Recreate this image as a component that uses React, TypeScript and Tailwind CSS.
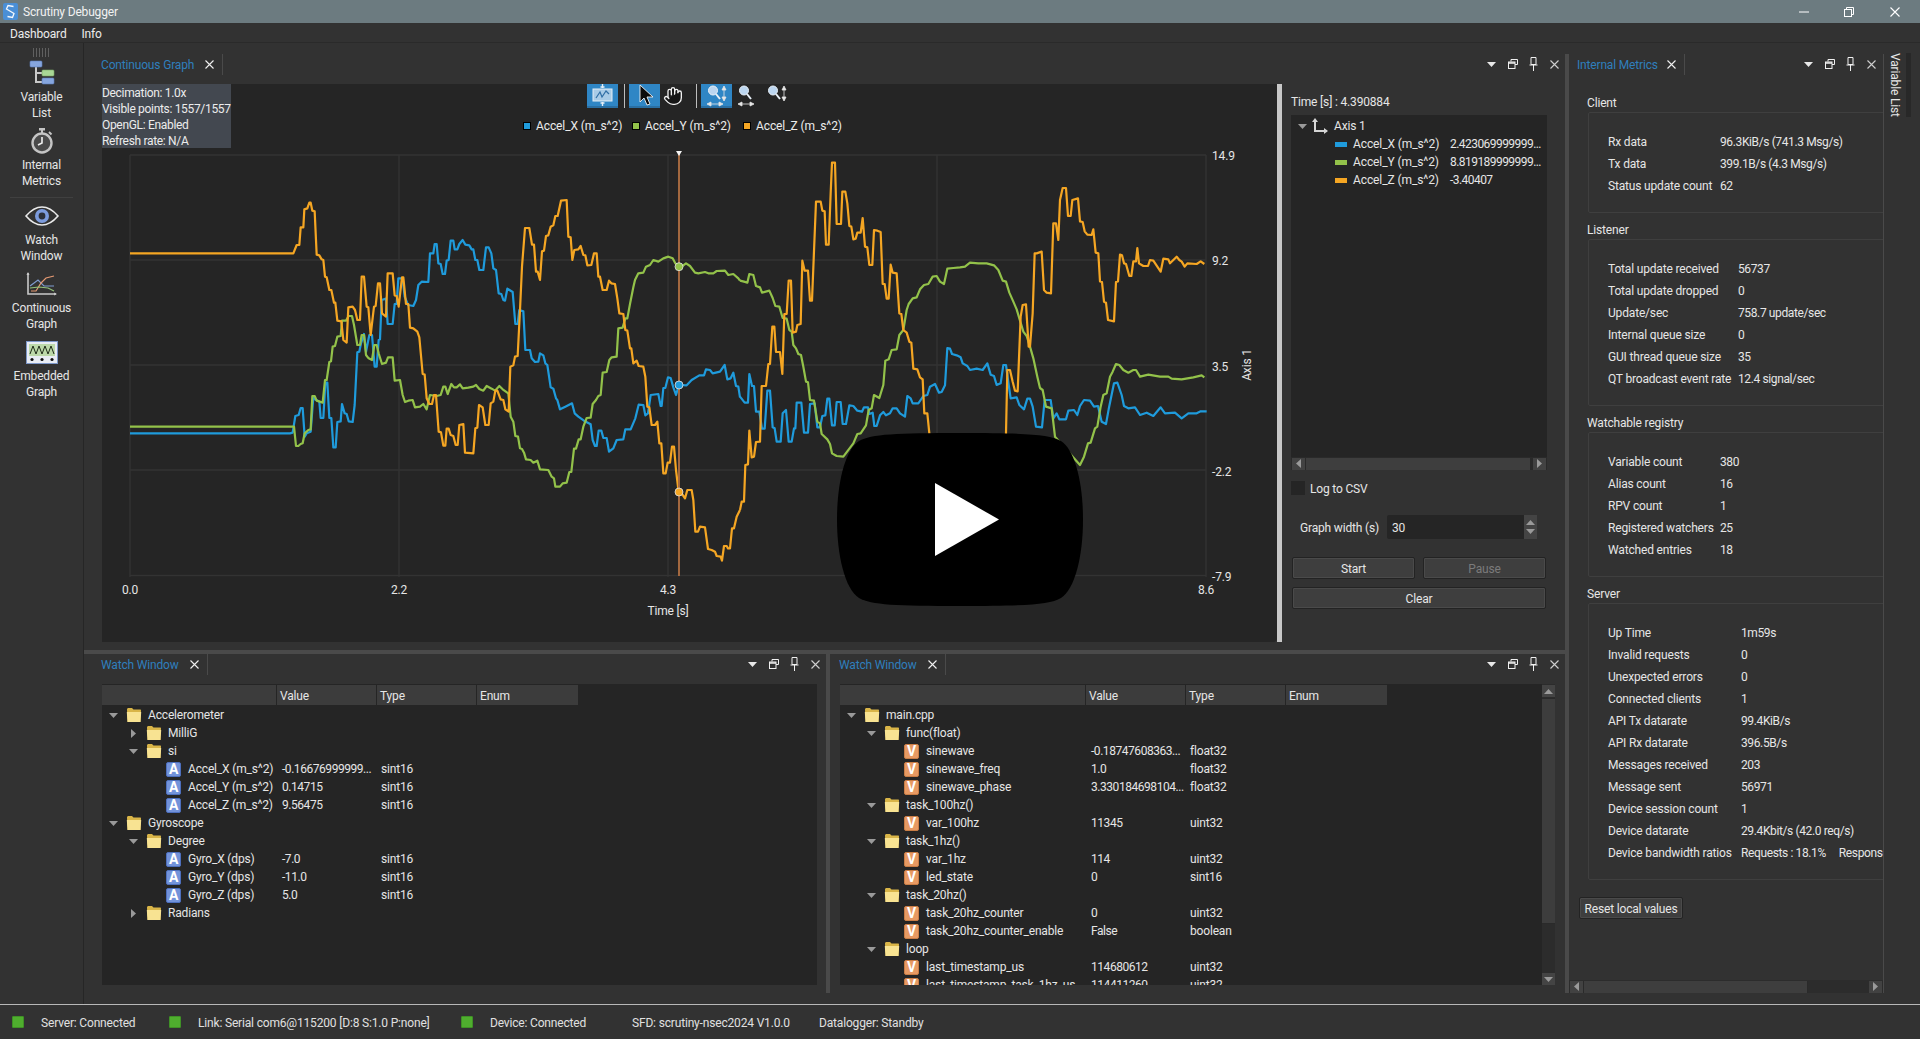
import { Hand } from 'lucide-react';

const orangeA = '-450,310 40,310 50,285 58,285 62,232 70,232 73,178 82,175 88,158 92,158 97,182 104,184 110,314 118,316 125,328 130,330 135,380 140,382 148,420 154,420 162,458 166,458 172,512 184,514 190,570 200,578 205,472 218,470 225,480 232,510 240,510 245,380 252,380 260,470 265,472 272,555 282,470 287,468 294,400 300,400 306,490 318,500 323,370 338,370 344,436 350,438 356,470 366,382 370,382 378,462 385,462 390,533 400,535 412,545 418,562 428,672 434,674 440,745 448,762 456,762 462,735 468,735 476,845 483,847 490,887 496,887 500,836 506,836 512,855 520,858 527,885 533,885 538,825 550,822 555,908 580,910 586,835 592,833 597,765 608,772 616,825 626,825 632,760 640,755 646,722 652,722 662,748 670,750 676,778 686,785 691,650 700,646 705,620 713,618 720,480 726,350 735,234 748,234 756,284 762,284 768,365 773,365 780,390 786,304 792,302 798,258 805,256 812,230 820,226 826,198 833,198 843,152 860,150 865,260 872,262 877,330 883,300 895,298 902,288 910,315 916,316 922,346 934,345 942,310 950,310 955,380 960,380 968,420 980,420 987,392 994,400 1005,402 1012,445 1018,490 1030,492 1036,540 1042,542 1050,595 1054,595 1060,640 1070,632 1076,648 1090,650 1096,680 1102,770 1108,772 1115,825 1125,825 1132,815 1138,880 1144,880 1150,970 1157,970 1163,938 1170,938 1176,890 1182,890 1188,960 1196,1026 1205,1030 1215,1045 1222,1020 1235,1020 1240,1050 1246,1145 1254,1145 1260,1130 1275,1132 1284,1197 1295,1200 1305,1205 1310,1218 1322,1220 1326,1232 1332,1188 1340,1188 1344,1195 1350,1195 1356,1135 1362,1135 1370,1100 1380,1080';
const orangeB = '0,1080 5,1055 12,1055 16,945 24,943 28,842 35,922 42,920 48,876 60,875 65,708 78,708 85,642 90,642 97,530 103,530 108,606 120,606 127,672 133,492 140,492 146,392 153,392 158,548 168,545 172,525 182,522 187,332 194,362 204,362 210,452 216,452 228,155 242,155 247,182 254,184 258,284 266,284 272,130 276,38 285,38 290,222 303,222 307,125 316,125 322,160 328,228 334,230 340,268 347,266 352,248 362,248 368,204 375,290 382,292 388,345 397,345 402,240 412,242 422,246 428,402 434,402 440,446 446,446 452,344 458,368 470,370 478,490 484,492 490,540 500,548 508,575 514,578 520,656 532,658 540,682 548,688 553,790 562,790 568,850 580,960 790,960 798,850 802,660 810,660 818,695 825,722 833,724 842,500 848,465 858,463 866,590 870,590 878,490 884,310 890,310 905,305 912,420 920,428 933,430 940,220 948,220 955,270 960,150 968,114 978,114 984,198 992,198 997,150 1014,145 1020,214 1028,216 1034,244 1042,254 1055,255 1060,238 1067,308 1075,310 1080,394 1086,396 1092,455 1098,458 1104,510 1122,514 1128,396 1134,394 1140,314 1146,316 1152,340 1158,342 1168,378 1174,378 1180,334 1188,334 1192,294 1197,340 1210,348 1224,348 1230,330 1240,332 1252,350 1262,365 1270,326 1285,328 1290,340 1300,330 1310,320 1318,330 1325,335 1334,350 1342,340 1370,342 1382,334 1393,342';
const greenA = '-450,830 42,830 48,888 55,888 62,882 68,880 74,850 85,840 92,838 97,738 104,738 110,752 128,758 135,690 140,690 148,636 153,634 158,590 165,588 172,560 182,558 186,512 198,512 206,498 216,498 222,525 232,585 240,585 245,555 252,555 258,615 266,625 276,630 283,585 290,585 296,610 306,642 318,638 324,622 338,622 344,692 360,690 368,735 375,756 385,752 398,750 405,772 420,770 430,762 440,778 450,735 470,738 482,735 490,710 496,710 503,732 514,702 522,712 530,712 540,703 548,715 565,713 580,710 588,705 598,717 610,722 620,708 635,716 645,722 658,708 668,718 685,730 692,800 700,815 706,858 714,860 720,895 726,897 732,908 738,928 752,930 760,938 772,932 780,958 805,960 815,980 822,985 826,1010 840,1010 848,1000 860,998 868,966 874,966 882,896 888,896 896,868 902,868 910,830 920,804 932,803 938,762 948,750 955,738 962,735 968,668 980,666 988,630 995,622 1010,620 1015,535 1028,533 1036,505 1042,505 1050,462 1060,412 1065,390 1075,370 1090,368 1098,350 1110,345 1120,330 1135,335 1150,325 1165,320 1178,325 1186,340 1196,350 1205,350 1218,340 1230,348 1245,368 1255,370 1275,366 1285,370 1300,370 1310,363 1335,362 1345,375 1360,372 1375,385 1380,392';
const greenB = '0,392 12,395 22,398 28,372 40,375 48,408 60,412 66,428 88,422 98,444 106,468 118,470 128,504 140,506 148,540 155,545 160,585 168,595 175,612 183,615 190,650 198,695 204,697 210,750 222,752 232,815 240,820 245,852 262,868 270,882 276,910 290,918 310,920 340,880 352,852 362,850 378,826 386,780 395,775 402,735 418,744 430,705 436,632 446,628 455,600 470,598 478,555 490,540 500,480 506,462 518,445 530,442 540,418 552,405 565,402 578,380 590,378 600,395 612,402 622,356 640,354 660,352 675,350 690,338 715,340 740,340 762,346 775,360 788,392 798,395 808,428 820,455 830,478 838,505 850,545 860,558 870,590 880,625 892,680 900,714 908,720 918,770 935,775 945,860 1020,945 1032,920 1044,880 1052,878 1065,835 1072,830 1082,770 1090,735 1100,730 1110,680 1118,665 1128,642 1138,645 1150,660 1165,668 1180,660 1188,660 1200,680 1225,674 1260,680 1285,680 1295,686 1325,688 1360,682 1385,676 1393,682';
const blueA = '-450,850 30,850 38,848 46,798 56,795 62,774 68,774 74,860 80,850 92,845 100,740 105,748 118,755 122,804 130,804 136,698 142,698 148,804 154,804 160,892 167,892 172,816 182,814 186,762 194,790 200,792 206,814 218,816 224,765 232,607 238,605 243,580 252,552 258,605 268,555 276,555 284,650 290,650 296,570 300,568 305,450 318,446 323,522 338,522 344,462 350,462 355,385 368,385 374,440 384,465 400,468 408,450 415,405 425,395 445,396 450,310 460,310 464,282 470,282 475,340 482,342 488,372 495,372 500,332 506,330 512,272 520,272 524,298 532,298 538,282 548,270 556,284 568,286 575,298 580,298 586,330 592,330 598,360 610,360 618,292 626,292 634,310 640,355 648,360 656,430 664,432 670,450 675,452 682,416 698,426 706,522 713,522 718,480 730,484 736,600 750,600 755,625 765,636 775,635 780,610 790,616 796,640 802,645 812,712 820,716 828,745 832,750 840,778 856,770 876,760 884,790 895,800 912,812 932,823 938,870 945,888 950,888 956,842 964,842 970,864 980,864 987,905 1000,895 1010,870 1030,868 1036,838 1052,838 1066,805 1076,764 1090,765 1096,796 1104,790 1112,735 1135,732 1142,768 1145,768 1150,714 1156,714 1164,682 1172,684 1180,712 1188,735 1197,705 1220,706 1235,690 1258,676 1272,676 1278,658 1290,660 1298,670 1320,665 1334,645 1342,688 1352,685 1360,668 1368,708 1375,710 1380,742';
const blueB = '0,740 14,758 24,758 28,672 36,708 42,708 48,785 58,785 66,836 74,836 82,722 90,722 98,832 104,835 110,875 122,875 128,790 138,780 146,875 155,875 162,835 166,835 170,758 184,758 192,848 204,848 210,762 224,760 232,832 240,832 247,798 256,796 262,746 268,746 276,826 284,826 290,756 302,756 308,822 318,822 328,766 340,768 352,782 366,785 372,772 384,772 388,792 398,788 403,828 410,828 420,796 430,786 438,796 450,790 458,775 470,775 480,790 495,800 502,738 512,745 518,760 535,760 550,738 562,735 570,710 585,702 597,728 605,726 615,706 622,594 630,596 636,612 650,616 662,622 668,640 682,648 690,660 710,656 728,660 742,640 752,674 762,678 770,705 782,700 790,645 798,645 804,690 812,745 830,742 838,765 852,778 862,746 870,746 878,770 888,830 906,832 914,750 932,750 940,805 950,790 958,808 978,808 985,782 1002,780 1012,795 1020,768 1032,750 1050,752 1062,770 1074,768 1085,815 1098,822 1106,778 1122,700 1132,698 1145,735 1152,768 1165,775 1185,772 1200,795 1220,788 1240,798 1262,772 1275,790 1305,788 1325,805 1345,790 1370,790 1382,784 1400,784';

const BLUE = '#1f9bdc';
const GREEN = '#93c24a';
const ORANGE = '#f5a623';

const pushButton = 'text-center bg-[#3e3e3e] border border-[#232323] rounded-[2px] shadow-[inset_0_0_0_1px_#4a4a4a]';

function TriangleDown({ color = '#9a9a9a' }: { color?: string }) {
  return (
    <svg width="9" height="5" viewBox="0 0 9 5">
      <path d="M0 0h9L4.5 5z" fill={color} />
    </svg>
  );
}

function TriangleRight() {
  return (
    <svg width="5" height="9" viewBox="0 0 5 9">
      <path d="M0 0l5 4.5L0 9z" fill="#9a9a9a" />
    </svg>
  );
}

function DockButtons() {
  return (
    <div className="flex items-center text-white">
      <div className="w-[21px] h-5 flex items-center justify-center"><TriangleDown color="#e8e8e8" /></div>
      <div className="w-[21px] h-5 flex items-center justify-center">
        <svg width="10" height="10" viewBox="0 0 10 10" fill="none" stroke="#f0f0f0">
          <path d="M3 2.5V.5h6.5v5H7" />
          <rect x=".5" y="3" width="6.5" height="6.5" strokeWidth="1" />
          <path d="M.5 4h6.5" strokeWidth="1.5" />
        </svg>
      </div>
      <div className="w-[21px] h-5 flex items-center justify-center">
        <svg width="9" height="14" viewBox="0 0 9 14" fill="none" stroke="#f0f0f0">
          <path d="M2 .5h5v7H2z M.5 8h8 M4.5 8v6" />
        </svg>
      </div>
      <div className="w-[21px] h-5 flex items-center justify-center">
        <svg width="9" height="9" viewBox="0 0 9 9" stroke="#cfcfcf" strokeWidth="1.1">
          <path d="M.5.5l8 8M8.5.5l-8 8" />
        </svg>
      </div>
    </div>
  );
}

function DockTab({ title, tabWidth }: { title: string; tabWidth: string }) {
  return (
    <div className={`flex items-center h-[21px] border-r border-[#4a4a4a] ${tabWidth}`}>
      <span className="text-[#2f7fbd] whitespace-nowrap">{title}</span>
      <svg className="ml-auto mr-[8px]" width="9" height="9" viewBox="0 0 9 9" stroke="#f0f0f0" strokeWidth="1.1">
        <path d="M.5.5l8 8M8.5.5l-8 8" />
      </svg>
    </div>
  );
}

function ToolButton({ icon, lines }: { icon: React.ReactNode; lines: string[] }) {
  return (
    <div className="h-16 flex flex-col items-center">
      <div className="h-8 flex items-center justify-center">{icon}</div>
      {lines.map((l) => (
        <div key={l} className="h-4 leading-4 text-center">{l}</div>
      ))}
    </div>
  );
}

function VariableListIcon() {
  return (
    <svg width="26" height="26" viewBox="0 0 26 26" fill="none">
      <path d="M7 6v17M7 13h7M7 22h7" stroke="#c9c9c9" strokeWidth="2" />
      <rect x="1" y="1" width="12" height="6" rx="1" fill="#86a6de" stroke="#5c7cb8" strokeWidth=".6" />
      <rect x="13" y="10" width="12" height="6" rx="1" fill="#a9d796" stroke="#7aa866" strokeWidth=".6" />
      <rect x="13" y="18" width="12" height="6" rx="1" fill="#86a6de" stroke="#5c7cb8" strokeWidth=".6" />
    </svg>
  );
}

function StopwatchIcon() {
  return (
    <svg width="24" height="26" viewBox="0 0 24 26" fill="none">
      <rect x="9" y="0" width="6" height="2.5" fill="#c4c4c4" />
      <rect x="11" y="2" width="2" height="3" fill="#c4c4c4" />
      <path d="M19 4l2.5 2.5" stroke="#c4c4c4" strokeWidth="2" />
      <circle cx="12" cy="15" r="9.5" fill="#4a4a4a" stroke="#c4c4c4" strokeWidth="2.4" />
      <path d="M12 9v6l-4 2" stroke="#efefef" strokeWidth="1.6" />
    </svg>
  );
}

function EyeIcon() {
  return (
    <svg width="34" height="20" viewBox="0 0 34 20" fill="none">
      <path d="M1 10C7 3 12 1 17 1s10 2 16 9c-6 7-11 9-16 9S7 17 1 10z" stroke="#eaeaea" strokeWidth="1.6" />
      <circle cx="17" cy="10" r="7" fill="#7c9bdc" />
      <circle cx="17" cy="10" r="3.4" fill="#2c3038" />
    </svg>
  );
}

function ContinuousIcon() {
  return (
    <svg width="32" height="25" viewBox="0 0 32 25" fill="none">
      <path d="M2 1v21h28" stroke="#c9c9c9" strokeWidth="1.6" />
      <path d="M2 0l-1.5 3h3zM31 22l-3-1.5v3z" fill="#c9c9c9" />
      <path d="M4 14l8-6 6 6 10 0" stroke="#7f9bd0" strokeWidth="1.2" />
      <path d="M5 19h5l5-8 5-5 8-2" stroke="#e59a73" strokeWidth="1.2" />
      <path d="M4 16l9-1 9 1 6 3" stroke="#93c27a" strokeWidth="1.2" />
    </svg>
  );
}

function EmbeddedIcon() {
  return (
    <svg width="32" height="23" viewBox="0 0 32 23">
      <rect x=".5" y=".5" width="31" height="22" fill="#e8ecf4" stroke="#7d97c8" />
      <rect x="3" y="3" width="26" height="12" fill="#bcd9a9" />
      <path d="M4 13l3-8 3 8 3-8 3 8 3-8 3 8 3-8 3 8" fill="none" stroke="#1e2a18" strokeWidth="1" />
      <circle cx="6" cy="18.5" r="1.6" fill="#111" />
      <circle cx="16" cy="18.5" r="1.6" fill="#111" />
      <circle cx="26" cy="18.5" r="1.6" fill="#111" />
    </svg>
  );
}

function Sidebar() {
  return (
    <div className="w-[84px] shrink-0 border-r border-[#262626] flex flex-col pt-[5px]">
      <div className="h-[9px] mx-auto w-[17px] bg-[repeating-linear-gradient(90deg,#6b6b6b_0_1px,transparent_1px_3px)] opacity-80" />
      <ToolButton icon={<VariableListIcon />} lines={['Variable', 'List']} />
      <div className="h-1" />
      <ToolButton icon={<StopwatchIcon />} lines={['Internal', 'Metrics']} />
      <div className="mt-2 mb-[2px] mx-[10px] h-px bg-[#404040]" />
      <ToolButton icon={<EyeIcon />} lines={['Watch', 'Window']} />
      <div className="h-1" />
      <ToolButton icon={<ContinuousIcon />} lines={['Continuous', 'Graph']} />
      <div className="h-1" />
      <ToolButton icon={<EmbeddedIcon />} lines={['Embedded', 'Graph']} />
    </div>
  );
}

function ZoomIcon({ h, v }: { h?: boolean; v?: boolean }) {
  return (
    <svg width="31" height="24" viewBox="0 0 31 24" fill="none">
      <circle cx="12" cy="6.5" r="4.5" fill="#bcd6f0" stroke="#e8f0f8" />
      <path d="M15 10l4 5" stroke="#e8f0f8" strokeWidth="2" />
      {v && <path d="M23 4v11M21 6l2-4 2 4zM21 13l2 4 2-4z" stroke="#e6e6e6" fill="#e6e6e6" strokeWidth=".8" />}
      {h && <path d="M8 20h12M10 18l-4 2 4 2zM18 18l4 2-4 2z" stroke="#e6e6e6" fill="#e6e6e6" strokeWidth=".8" />}
    </svg>
  );
}

function GraphToolbar() {
  return (
    <div className="absolute left-[485px] top-0 flex items-start">
      <div className="w-[31px] h-6 bg-[#2f86c5] border-b-2 border-[#2a6fa3] flex items-center justify-center">
        <svg width="23" height="22" viewBox="0 0 23 22" fill="none">
          <path d="M11.5 0v4M9.5 3h4M11.5 22v-4M9.5 19h4" stroke="#e5eef6" strokeWidth="1.4" />
          <rect x="2" y="5" width="19" height="12" fill="#a8cbe6" stroke="#e5eef6" />
          <path d="M5 14l4-6 2 5 4-6 3 3" stroke="#2f6ea5" strokeWidth="1.2" />
        </svg>
      </div>
      <div className="w-px h-6 bg-[#bdbdbd] ml-[6px] mr-[4px]" />
      <div className="w-[31px] h-6 bg-[#2f86c5] border-b-2 border-[#2a6fa3] flex items-center justify-center">
        <svg width="20" height="22" viewBox="0 0 20 22">
          <path d="M5 1v17l4-4 3 7 3-1-3-7h6z" fill="#0c0c0c" stroke="#f2f2f2" strokeWidth=".9" />
        </svg>
      </div>
      <div className="w-[26px] h-6 flex items-center justify-center">
        <Hand size={20} color="#f2f2f2" fill="#161616" strokeWidth={1.6} />
      </div>
      <div className="w-px h-6 bg-[#bdbdbd] ml-[10px] mr-[4px]" />
      <div className="w-[31px] h-6 bg-[#2f86c5] border-b-2 border-[#2a6fa3]"><ZoomIcon h v /></div>
      <div className="w-[29px] h-6"><ZoomIcon h /></div>
      <div className="w-[31px] h-6"><ZoomIcon v /></div>
    </div>
  );
}

function LegendItem({ color, label, width }: { color: string; label: string; width: string }) {
  return (
    <div className={`flex items-center ${width}`}>
      <span className="w-2 h-2 border border-black mr-[5px]" style={{ backgroundColor: color }} />
      <span className="text-[#ececec] whitespace-nowrap tracking-[-0.1px]">{label}</span>
    </div>
  );
}

function Chart() {
  const xTicks = [130, 399, 668, 937, 1206];
  const yTicks = [155, 260, 365, 470, 575.5];
  const series: [string, string, string][] = [
    [BLUE, blueA, blueB],
    [GREEN, greenA, greenB],
    [ORANGE, orangeA, orangeB],
  ];
  return (
    <div className="relative w-[1175px] h-[558px] bg-[#252525] shrink-0 rounded-br">
      <svg width="1175" height="558" viewBox="102 84 1175 558" className="block" fontSize="12" fill="#e6e6e6">
        {xTicks.map((x) => <line key={x} x1={x} x2={x} y1={155} y2={577} stroke="#333" strokeWidth="1.4" />)}
        {yTicks.map((y) => <line key={y} x1={130} x2={1206} y1={y} y2={y} stroke="#333" strokeWidth="1.4" />)}
        {series.map(([color, a, b]) => (
          <g key={color} fill="none" stroke={color} strokeWidth="6.6" strokeLinejoin="round">
            <polyline transform="translate(280 150) scale(0.33333)" points={a} />
            <polyline transform="translate(740 150) scale(0.33333)" points={b} />
          </g>
        ))}
        <line x1="679" x2="679" y1="153" y2="576" stroke="#a3683f" strokeWidth="2" />
        <path d="M676 151h6l-3 5z" fill="#f4f4f4" />
        <circle cx="679" cy="266.7" r="4" fill={GREEN} stroke="#e3e3e3" strokeWidth=".8" />
        <circle cx="679" cy="385" r="4" fill={BLUE} stroke="#e3e3e3" strokeWidth=".8" />
        <circle cx="679" cy="492" r="4" fill={ORANGE} stroke="#e3e3e3" strokeWidth=".8" />
        <text x="1212" y="160">14.9</text>
        <text x="1212" y="265">9.2</text>
        <text x="1212" y="371">3.5</text>
        <text x="1212" y="476">-2.2</text>
        <text x="1212" y="581">-7.9</text>
        <text x="130" y="594" textAnchor="middle">0.0</text>
        <text x="399" y="594" textAnchor="middle">2.2</text>
        <text x="668" y="594" textAnchor="middle">4.3</text>
        <text x="1206" y="594" textAnchor="middle">8.6</text>
        <text x="668" y="615" textAnchor="middle">Time [s]</text>
        <text transform="translate(1251 365) rotate(-90)" textAnchor="middle">Axis 1</text>
      </svg>
      <div className="absolute left-0 top-0 w-[129px] h-16 pt-px bg-[#434850] text-[#ececec] leading-4 whitespace-nowrap tracking-[-0.32px]">
        <div>Decimation: 1.0x</div>
        <div>Visible points: 1557/1557</div>
        <div>OpenGL: Enabled</div>
        <div>Refresh rate: N/A</div>
      </div>
      <GraphToolbar />
      <div className="absolute left-[421px] top-[34px] h-4 flex">
        <LegendItem color={BLUE} label="Accel_X (m_s^2)" width="w-[109px]" />
        <LegendItem color={GREEN} label="Accel_Y (m_s^2)" width="w-[111px]" />
        <LegendItem color={ORANGE} label="Accel_Z (m_s^2)" width="w-[110px]" />
      </div>
    </div>
  );
}

function HScrollBar({ thumb, track }: { thumb: string; track: string }) {
  return (
    <div className={`h-[13px] flex items-center px-[1px] ${track}`}>
      <div className="w-[13px] h-[12px] bg-[#424242] flex items-center justify-center rotate-180"><TriangleRight /></div>
      <div className={`h-[12px] bg-[#3e3e3e] border-x border-[#2a2a2a] ${thumb}`} />
      <div className="flex-1" />
      <div className="w-[13px] h-[12px] bg-[#424242] flex items-center justify-center"><TriangleRight /></div>
    </div>
  );
}

function ValueRow({ color, name, value }: { color: string; name: string; value: string }) {
  return (
    <div className="h-[18px] flex items-center whitespace-nowrap">
      <span className="w-3 h-[5px] ml-[44px] mr-[6px] shrink-0" style={{ backgroundColor: color }} />
      <span className="w-[97px] shrink-0 tracking-[-0.1px]">{name}</span>
      <span className="tracking-[-0.55px]">{value}</span>
    </div>
  );
}

function GraphControls() {
  return (
    <div className="w-[256px] ml-[9px] flex flex-col">
      <div className="mt-[10px] h-4 leading-4">Time [s] : 4.390884</div>
      <div className="mt-[5px] h-[355px] bg-[#252525] flex flex-col">
        <div className="flex-1 pt-[2px]">
          <div className="h-[18px] flex items-center">
            <span className="ml-[7px] mr-[5px] flex"><TriangleDown /></span>
            <svg width="16" height="16" viewBox="0 0 16 16" fill="none" stroke="#d6d6d6" strokeWidth="2">
              <path d="M3 3v10h12" />
              <path d="M0 4l3-4 3 4z" fill="#d6d6d6" stroke="none" />
              <path d="M12 10l4 3-4 3z" fill="#d6d6d6" stroke="none" />
            </svg>
            <span className="ml-[6px]">Axis 1</span>
          </div>
          <ValueRow color={BLUE} name="Accel_X (m_s^2)" value="2.423069999999..." />
          <ValueRow color={GREEN} name="Accel_Y (m_s^2)" value="8.819189999999..." />
          <ValueRow color={ORANGE} name="Accel_Z (m_s^2)" value="-3.40407" />
        </div>
        <HScrollBar thumb="w-[226px]" track="bg-[#2a2a2a]" />
      </div>
      <div className="mt-[11px] h-[14px] flex items-center">
        <span className="w-[14px] h-[14px] bg-[#252525]" />
        <span className="ml-[5px] pt-px">Log to CSV</span>
      </div>
      <div className="mt-[20px] h-6 flex items-center">
        <span className="ml-[9px] w-[87px] pt-[2px]">Graph width (s)</span>
        <div className="w-[150px] h-6 bg-[#252525] rounded-[2px] flex items-center">
          <span className="ml-[5px] flex-1 pt-[2px]">30</span>
          <div className="w-[13px] h-6 bg-[#444] flex flex-col items-center justify-center gap-[4px]">
            <span className="rotate-180 flex"><TriangleDown /></span>
            <TriangleDown />
          </div>
        </div>
      </div>
      <div className="mt-[18px] mx-px flex gap-2">
        <div className={`flex-1 h-[22px] leading-[22px] ${pushButton}`}>Start</div>
        <div className={`flex-1 h-[22px] leading-[22px] text-[#7b7b7b] ${pushButton}`}>Pause</div>
      </div>
      <div className={`mt-2 mx-px h-[22px] leading-[22px] ${pushButton}`}>Clear</div>
    </div>
  );
}

function GraphPanel() {
  return (
    <div className="h-[607px] flex flex-col shrink-0">
      <div className="h-[41px] pt-[11px] flex items-start justify-between pl-[17px]">
        <DockTab title="Continuous Graph" tabWidth="w-[122px]" />
        <DockButtons />
      </div>
      <div className="flex pl-[18px]">
        <Chart />
        <div className="w-[5px] h-[558px] bg-[#c8c8c8] shrink-0" />
        <GraphControls />
      </div>
    </div>
  );
}

type WatchKind = 'folder' | 'alias' | 'var';
type Arrow = 'open' | 'closed' | 'none';

interface WatchRow {
  name: string;
  depth: 0 | 1 | 2;
  kind: WatchKind;
  arrow?: Arrow;
  value?: string;
  type?: string;
}

const leftRows: WatchRow[] = [
  { name: 'Accelerometer', depth: 0, kind: 'folder', arrow: 'open' },
  { name: 'MilliG', depth: 1, kind: 'folder', arrow: 'closed' },
  { name: 'si', depth: 1, kind: 'folder', arrow: 'open' },
  { name: 'Accel_X (m_s^2)', depth: 2, kind: 'alias', value: '-0.16676999999...', type: 'sint16' },
  { name: 'Accel_Y (m_s^2)', depth: 2, kind: 'alias', value: '0.14715', type: 'sint16' },
  { name: 'Accel_Z (m_s^2)', depth: 2, kind: 'alias', value: '9.56475', type: 'sint16' },
  { name: 'Gyroscope', depth: 0, kind: 'folder', arrow: 'open' },
  { name: 'Degree', depth: 1, kind: 'folder', arrow: 'open' },
  { name: 'Gyro_X (dps)', depth: 2, kind: 'alias', value: '-7.0', type: 'sint16' },
  { name: 'Gyro_Y (dps)', depth: 2, kind: 'alias', value: '-11.0', type: 'sint16' },
  { name: 'Gyro_Z (dps)', depth: 2, kind: 'alias', value: '5.0', type: 'sint16' },
  { name: 'Radians', depth: 1, kind: 'folder', arrow: 'closed' },
];

const rightRows: WatchRow[] = [
  { name: 'main.cpp', depth: 0, kind: 'folder', arrow: 'open' },
  { name: 'func(float)', depth: 1, kind: 'folder', arrow: 'open' },
  { name: 'sinewave', depth: 2, kind: 'var', value: '-0.18747608363...', type: 'float32' },
  { name: 'sinewave_freq', depth: 2, kind: 'var', value: '1.0', type: 'float32' },
  { name: 'sinewave_phase', depth: 2, kind: 'var', value: '3.330184698104...', type: 'float32' },
  { name: 'task_100hz()', depth: 1, kind: 'folder', arrow: 'open' },
  { name: 'var_100hz', depth: 2, kind: 'var', value: '11345', type: 'uint32' },
  { name: 'task_1hz()', depth: 1, kind: 'folder', arrow: 'open' },
  { name: 'var_1hz', depth: 2, kind: 'var', value: '114', type: 'uint32' },
  { name: 'led_state', depth: 2, kind: 'var', value: '0', type: 'sint16' },
  { name: 'task_20hz()', depth: 1, kind: 'folder', arrow: 'open' },
  { name: 'task_20hz_counter', depth: 2, kind: 'var', value: '0', type: 'uint32' },
  { name: 'task_20hz_counter_enable', depth: 2, kind: 'var', value: 'False', type: 'boolean' },
  { name: 'loop', depth: 1, kind: 'folder', arrow: 'open' },
  { name: 'last_timestamp_us', depth: 2, kind: 'var', value: '114680612', type: 'uint32' },
  { name: 'last_timestamp_task_1hz_us', depth: 2, kind: 'var', value: '114411260', type: 'uint32' },
];

const depthPad = ['pl-[7px]', 'pl-[27px]', 'pl-[47px]'];

function FolderIcon() {
  return (
    <svg width="16" height="16" viewBox="0 0 16 16">
      <path d="M1 2.5C1 1.6 1.6 1 2.5 1H6l1.5 1.5H14c.8 0 1 .5 1 1L14.5 15H1.5z" fill="#d9b548" />
      <path d="M1.5 15L.8 5h14.4l-.7 10z" fill="#f8e392" />
    </svg>
  );
}

function RowIcon({ kind }: { kind: WatchKind }) {
  if (kind === 'folder') return <FolderIcon />;
  if (kind === 'alias') {
    return (
      <span className="w-[15px] h-[15px] rounded-[2px] bg-[#7393da] border border-[#4d6fbd] text-white font-bold text-[14px] leading-[13px] text-center">A</span>
    );
  }
  return (
    <span className="w-[15px] h-[15px] rounded-[2px] bg-[#e79a63] border border-[#c97d46] text-white font-bold text-[14px] leading-[13px] text-center">V</span>
  );
}

function WatchRowView({ row, nameWidth }: { row: WatchRow; nameWidth: string }) {
  return (
    <div className="h-[18px] flex items-center whitespace-nowrap">
      <div className={`${nameWidth} flex items-center shrink-0 ${depthPad[row.depth]}`}>
        <span className="w-[10px] flex items-center justify-center -translate-x-px">
          {row.arrow === 'open' && <TriangleDown />}
          {row.arrow === 'closed' && <TriangleRight />}
        </span>
        <span className="ml-[7px] w-4 flex items-center"><RowIcon kind={row.kind} /></span>
        <span className="ml-[6px]">{row.name}</span>
      </div>
      <span className="w-[100px] pl-[5px] shrink-0 tracking-[-0.45px]">{row.value}</span>
      <span className="pl-[4px]">{row.type}</span>
    </div>
  );
}

function WatchHeader({ nameWidth }: { nameWidth: string }) {
  const cell = 'h-[20px] leading-[22px] bg-[#3c3c3c] border-r border-[#252525] pl-[3px] shrink-0';
  return (
    <div className="flex h-[20px] shrink-0">
      <div className={`h-[20px] bg-[#3c3c3c] border-r border-[#252525] shrink-0 ${nameWidth}`} />
      <div className={`${cell} w-[100px]`}>Value</div>
      <div className={`${cell} w-[100px]`}>Type</div>
      <div className={`${cell} w-[102px]`}>Enum</div>
    </div>
  );
}

function VScrollBar() {
  return (
    <div className="w-[13px] shrink-0 bg-[#2c2c2c] flex flex-col items-center">
      <div className="h-3 w-full bg-[#444] mt-[1px] flex items-center justify-center"><span className="rotate-180 flex"><TriangleDown /></span></div>
      <div className="w-full h-[226px] mt-[1px] bg-[#3d3d3d] border-y border-[#2a2a2a]" />
      <div className="flex-1" />
      <div className="h-3 w-full bg-[#444] flex items-center justify-center"><TriangleDown /></div>
    </div>
  );
}

function WatchPanel({ rows, nameWidth, outer, scroll }: {
  rows: WatchRow[];
  nameWidth: string;
  outer: string;
  scroll?: boolean;
}) {
  return (
    <div className={`flex flex-col ${outer}`}>
      <div className="h-[30px] flex items-start justify-between -ml-px">
        <DockTab title="Watch Window" tabWidth="w-[107px]" />
        <DockButtons />
      </div>
      <div className="w-[715px] h-[301px] bg-[#252525] flex overflow-hidden">
        <div className="flex-1 flex flex-col overflow-hidden pt-px">
          <WatchHeader nameWidth={nameWidth} />
          <div className="pt-px">
            {rows.map((r) => <WatchRowView key={r.name} row={r} nameWidth={nameWidth} />)}
          </div>
        </div>
        {scroll && <VScrollBar />}
      </div>
    </div>
  );
}

function MetricRows({ rows, labelWidth }: { rows: [string, string][]; labelWidth: string }) {
  return (
    <>
      {rows.map(([label, value]) => (
        <div key={label} className="h-[22px] flex items-center whitespace-nowrap">
          <span className={`shrink-0 ${labelWidth}`}>{label}</span>
          <span className="tracking-[-0.38px]">{value}</span>
        </div>
      ))}
    </>
  );
}

function MetricGroup({ title, rows, labelWidth, className }: {
  title: string;
  rows: [string, string][];
  labelWidth: string;
  className: string;
}) {
  return (
    <div className={className}>
      <div className="h-4 leading-4 mb-px">{title}</div>
      <div className="ml-px w-[330px] border border-[#3f3f3f] rounded-[2px] pt-[18px] pb-[15px] pl-[19px]">
        <MetricRows rows={rows} labelWidth={labelWidth} />
      </div>
    </div>
  );
}

function MetricsPanel() {
  return (
    <div className="w-[315px] shrink-0 mt-[11px] mb-[11px] border-r border-[#4a4a4a] flex flex-col">
      <div className="h-[30px] shrink-0 flex items-start justify-between pl-[8px] pr-px">
        <DockTab title="Internal Metrics" tabWidth="w-[108px]" />
        <DockButtons />
      </div>
      <div className="flex-1 overflow-hidden pl-[18px] pt-[11px]">
        <MetricGroup
          title="Client"
          labelWidth="w-[112px]"
          className="mb-[9px]"
          rows={[
            ['Rx data', '96.3KiB/s (741.3 Msg/s)'],
            ['Tx data', '399.1B/s (4.3 Msg/s)'],
            ['Status update count', '62'],
          ]}
        />
        <MetricGroup
          title="Listener"
          labelWidth="w-[130px]"
          className="mb-[9px]"
          rows={[
            ['Total update received', '56737'],
            ['Total update dropped', '0'],
            ['Update/sec', '758.7 update/sec'],
            ['Internal queue size', '0'],
            ['GUI thread queue size', '35'],
            ['QT broadcast event rate', '12.4 signal/sec'],
          ]}
        />
        <MetricGroup
          title="Watchable registry"
          labelWidth="w-[112px]"
          className="mb-[9px]"
          rows={[
            ['Variable count', '380'],
            ['Alias count', '16'],
            ['RPV count', '1'],
            ['Registered watchers', '25'],
            ['Watched entries', '18'],
          ]}
        />
        <MetricGroup
          title="Server"
          labelWidth="w-[133px]"
          className=""
          rows={[
            ['Up Time', '1m59s'],
            ['Invalid requests', '0'],
            ['Unexpected errors', '0'],
            ['Connected clients', '1'],
            ['API Tx datarate', '99.4KiB/s'],
            ['API Rx datarate', '396.5B/s'],
            ['Messages received', '203'],
            ['Message sent', '56971'],
            ['Device session count', '1'],
            ['Device datarate', '29.4Kbit/s (42.0 req/s)'],
            ['Device bandwidth ratios', 'Requests : 18.1%\u00a0\u00a0\u00a0\u00a0\u00a0Responses : 81.9%'],
          ]}
        />
        <div className={`mt-[17px] -ml-2 w-[104px] h-[22px] leading-[22px] ${pushButton}`}>Reset local values</div>
      </div>
      <HScrollBar thumb="w-[225px]" track="bg-[#2c2c2c]" />
    </div>
  );
}

function StatusItem({ text, width, led, lead }: { text: string; width: string; led?: boolean; lead?: string }) {
  return (
    <div className={`flex items-center shrink-0 whitespace-nowrap ${width} ${lead ?? ''}`}>
      {led && <span className="w-3 h-3 rounded-[1px] bg-[#4fae2e] border border-[#3f9126] mr-[17px]" />}
      <span className="pt-[2px]">{text}</span>
    </div>
  );
}

export default function App() {
  return (
    <div className="relative w-[1920px] h-[1039px] bg-[#323232] text-[#e6e6e6] text-[12px] tracking-[-0.17px] leading-4 [font-family:Roboto,sans-serif] flex flex-col overflow-hidden">
      <div className="h-[23px] bg-[#6c7b80] flex items-center shrink-0 text-[#f2f2f2]">
        <svg className="ml-[3px]" width="15" height="17" viewBox="0 0 15 17" fill="none">
          <rect width="15" height="17" rx="2" fill="#4a8fd6" />
          <path d="M10.5 3.5L5 2.5 3.5 6 11 10.5 9.5 14.5 4.5 13.5" stroke="#f4f8fc" strokeWidth="1.3" />
        </svg>
        <span className="ml-[5px]">Scrutiny Debugger</span>
        <svg className="ml-auto" width="10" height="2" viewBox="0 0 10 2"><path d="M0 1h10" stroke="#fff" /></svg>
        <svg className="ml-[35px]" width="10" height="10" viewBox="0 0 10 10" fill="none" stroke="#fff">
          <path d="M2.5 2.5V.5h7v7h-2" />
          <rect x=".5" y="2.5" width="7" height="7" />
        </svg>
        <svg className="ml-[36px] mr-[20px]" width="10" height="10" viewBox="0 0 10 10" stroke="#fff" strokeWidth="1.1">
          <path d="M.5.5l9 9M9.5.5l-9 9" />
        </svg>
      </div>
      <div className="h-5 flex items-center shrink-0 border-b border-[#2a2a2a] text-[#ececec]">
        <span className="ml-[10px] pt-[2px]">Dashboard</span>
        <span className="ml-[15px] pt-[2px]">Info</span>
      </div>
      <div className="h-[961px] flex shrink-0">
        <Sidebar />
        <div className="w-[1481px] shrink-0 flex flex-col">
          <GraphPanel />
          <div className="h-1 bg-[#4a4a4a] shrink-0" />
          <div className="flex">
            <WatchPanel rows={leftRows} nameWidth="w-[175px]" outer="w-[742px] pl-[18px]" />
            <div className="w-1 h-[339px] bg-[#4a4a4a] shrink-0" />
            <WatchPanel rows={rightRows} nameWidth="w-[246px]" outer="w-[735px] pl-[10px]" scroll />
          </div>
        </div>
        <div className="w-1 bg-[#4a4a4a] shrink-0 mt-[11px] mb-[11px]" />
        <MetricsPanel />
        <div className="flex-1 flex mt-[10px] items-start">
          <div className="w-[22px] h-[64px] [writing-mode:vertical-rl] whitespace-nowrap text-center leading-[22px]">Variable List</div>
          <div className="w-[5px] h-[64px] bg-[#282828]" />
        </div>
      </div>
      <div className="flex-1 border-t border-[#b8b8b8] flex text-[#e0e0e0]">
        <StatusItem led text="Server: Connected" width="w-[169px]" lead="pl-3" />
        <StatusItem led text="Link: Serial com6@115200 [D:8 S:1.0 P:none]" width="w-[292px]" />
        <StatusItem led text="Device: Connected" width="w-[171px]" />
        <StatusItem text="SFD: scrutiny-nsec2024 V1.0.0" width="w-[187px]" />
        <StatusItem text="Datalogger: Standby" width="w-[160px]" />
      </div>
      <svg className="absolute left-[837px] top-[433px]" width="246" height="173" viewBox="0 0 246 173">
        <path d="M123 0C186 0 212 1 224 8C238 17 246 50 246 86.5C246 123 238 156 224 165C212 172 186 173 123 173C60 173 34 172 22 165C8 156 0 123 0 86.5C0 50 8 17 22 8C34 1 60 0 123 0Z" fill="#000" />
        <path d="M98 50L162 86.5L98 123Z" fill="#fff" />
      </svg>
    </div>
  );
}
